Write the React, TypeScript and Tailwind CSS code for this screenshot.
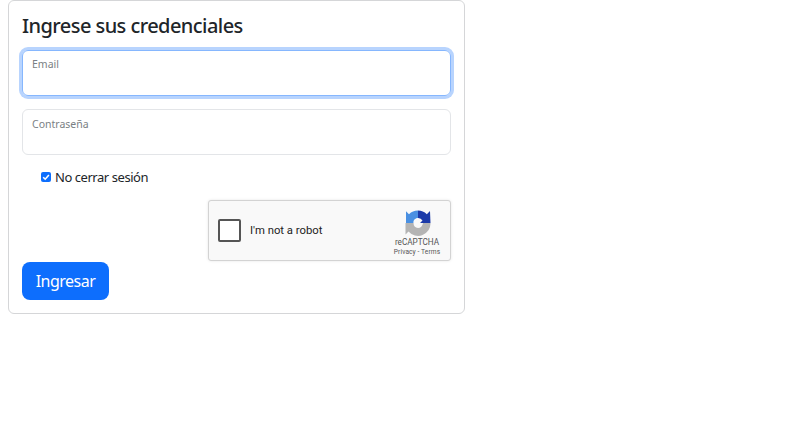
export default function App() {
  return (
    <div className="min-h-[433px] bg-white text-[#212529] font-['Noto_Sans',sans-serif]">
      <div className="ml-2 w-[457px] h-[314px] border border-[#d5d6d8] rounded-[6px] px-[13px] pt-[12px] box-border">
        <h1 className="text-[20px] leading-[26px] font-medium tracking-[-0.56px] text-[#212529]">Ingrese sus credenciales</h1>
        <div className="mt-[11px] h-[46px] rounded-[6px] border border-[#86b7fe] shadow-[0_0_0_3px_#b8d4fe] px-[9px] pt-[6px] text-[10.5px] leading-[15px] text-[#7a7f84]">Email</div>
        <div className="mt-[13px] h-[46px] rounded-[6px] border border-[#e3e5e8] px-[9px] pt-[7px] text-[10.5px] leading-[15px] text-[#7a7f84]">Contraseña</div>
        <label className="mt-[13px] ml-[19px] flex items-center h-[18px] text-[13px] leading-[18px] tracking-[-0.45px] text-[#212529]">
          <span className="w-[10px] h-[10px] rounded-[2px] bg-[#0d6efd] flex items-center justify-center">
            <svg viewBox="0 0 10 10" className="w-[10px] h-[10px]" fill="none">
              <path d="M2.2 5.2 L4.2 7.2 L7.9 3" stroke="#fff" strokeWidth="1.6" />
            </svg>
          </span>
          <span className="ml-[4px]">No cerrar sesión</span>
        </label>
        <div className="mt-[14px] flex justify-end">
          <div className="w-[243px] h-[61px] bg-[#f9f9f9] border border-[#d3d3d3] rounded-[3px] shadow-[0_0_3px_#0000001a] flex items-center font-['Roboto',sans-serif]">
            <span className="ml-[9px] w-[23px] h-[23px] bg-white border-2 border-[#555] rounded-[2px]"></span>
            <span className="ml-[9px] pt-[2px] text-[11.3px] text-[#222]">I'm not a robot</span>
            <div className="ml-auto w-[70px] flex flex-col items-center pt-[7px] mr-[-1px]">
              <svg viewBox="0 0 26 26" className="w-[26px] h-[26px] translate-x-[2px] -translate-y-[2px]">
                <path d="M13 0.5 A12.5 12.5 0 0 1 21.8 4.2 L25 1 L25.5 13 L15 13 L17.5 10.5 A5 5 0 0 0 13 8 Z" fill="#1c3aa9" />
                <path d="M13 0.5 A12.5 12.5 0 0 0 4 4.2 L1 1.2 L1 13 L8.5 13 C8 10.5 10 8 13 8 Z" fill="#4a90e2" />
                <path d="M0.5 13 L8.5 13 A5 5 0 0 0 13 18 C15.5 18 17.5 16 18 13 L25.5 13 A12.5 12.5 0 0 1 3.5 21.5 L0.5 24.5 Z" fill="#b4b4b4" />
              </svg>
              <span className="text-[8.2px] leading-[11px] -mt-[1px] translate-x-[1px] text-[#555]">reCAPTCHA</span>
              <span className="text-[6.6px] leading-[9px] translate-x-[1px] text-[#555] whitespace-nowrap tracking-[0.1px]">Privacy - Terms</span>
            </div>
          </div>
        </div>
        <button className="mt-px w-[87px] h-[38px] rounded-[8px] bg-[#0d6efd] text-white text-[16px] leading-[24px] tracking-[-0.5px]">Ingresar</button>
      </div>
    </div>
  );
}
